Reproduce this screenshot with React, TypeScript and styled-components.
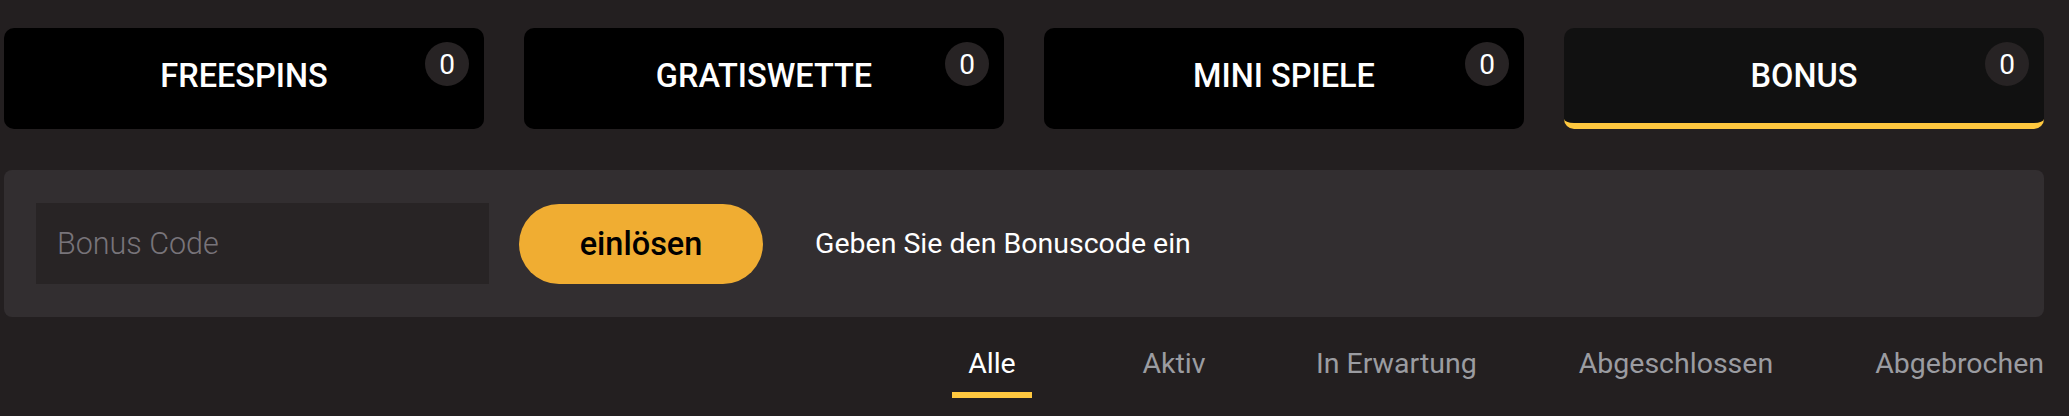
import React from "react";
import styled, { createGlobalStyle } from "styled-components";

const GlobalStyle = createGlobalStyle`
  html, body {
    margin: 0;
    padding: 0;
    background: #231f20;
    font-family: Roboto, "Liberation Sans", Arial, sans-serif;
  }
  * { box-sizing: border-box; }
`;

const Page = styled.div`
  width: 2069px;
  height: 416px;
  padding: 28px 25px 0 4px;
  background: #231f20;
`;

const CardRow = styled.div`
  display: grid;
  grid-template-columns: repeat(4, 1fr);
  gap: 40px;
`;

const Card = styled.div<{ $active?: boolean }>`
  position: relative;
  height: 101px;
  border-radius: 10px;
  background: ${(p) => (p.$active ? "#111111" : "#000000")};
  border-bottom: 6px solid ${(p) => (p.$active ? "#ffc83f" : "#000000")};
  display: flex;
  align-items: center;
  justify-content: center;
  color: #ffffff;
  font-size: 32.5px;
  font-weight: 500;
  text-transform: uppercase;
  cursor: pointer;
`;

const Badge = styled.span`
  position: absolute;
  top: 14px;
  right: 15px;
  width: 44px;
  height: 44px;
  border-radius: 50%;
  background: #272324;
  color: #ffffff;
  font-size: 28px;
  font-weight: 400;
  display: flex;
  align-items: center;
  justify-content: center;
`;

const Panel = styled.div`
  margin-top: 41px;
  background: #322e30;
  border-radius: 8px;
  padding: 33px 32px;
  display: flex;
  align-items: center;
`;

const CodeInput = styled.input`
  width: 453px;
  height: 81px;
  border: none;
  outline: none;
  background: #282425;
  padding: 0 0 0 21px;
  font-family: Roboto, "Liberation Sans", Arial, sans-serif;
  font-size: 30.5px;
  font-weight: 300;
  color: #ffffff;
  &::placeholder {
    color: #78747a;
  }
`;

const RedeemButton = styled.button`
  margin-left: 30px;
  width: 244px;
  height: 80px;
  border: none;
  border-radius: 40px;
  background: #f0ad32;
  color: #000000;
  font-family: Roboto, "Liberation Sans", Arial, sans-serif;
  font-size: 32.5px;
  font-weight: 500;
  cursor: pointer;
`;

const Hint = styled.span`
  margin-left: 52px;
  color: #ffffff;
  font-size: 28.5px;
  font-weight: 400;
`;

const Tabs = styled.div`
  margin-top: 30px;
  display: flex;
  justify-content: flex-end;
  gap: 102px;
`;

const Tab = styled.div<{ $active?: boolean }>`
  min-width: 80px;
  text-align: center;
  font-size: 28.5px;
  line-height: 33px;
  padding-bottom: 12px;
  border-bottom: 6px solid ${(p) => (p.$active ? "#ffc83f" : "transparent")};
  color: ${(p) => (p.$active ? "#ffffff" : "#9b9ca1")};
  white-space: nowrap;
  cursor: pointer;
`;

const cards = [
  { label: "Freespins", count: 0 },
  { label: "Gratiswette", count: 0 },
  { label: "Mini Spiele", count: 0 },
  { label: "Bonus", count: 0, active: true },
];

const tabs = ["Alle", "Aktiv", "In Erwartung", "Abgeschlossen", "Abgebrochen"];

export default function App() {
  return (
    <>
      <GlobalStyle />
      <Page>
        <CardRow>
          {cards.map((c) => (
            <Card key={c.label} $active={c.active}>
              {c.label}
              <Badge>{c.count}</Badge>
            </Card>
          ))}
        </CardRow>
        <Panel>
          <CodeInput placeholder="Bonus Code" />
          <RedeemButton>einlösen</RedeemButton>
          <Hint>Geben Sie den Bonuscode ein</Hint>
        </Panel>
        <Tabs>
          {tabs.map((t, i) => (
            <Tab key={t} $active={i === 0}>
              {t}
            </Tab>
          ))}
        </Tabs>
      </Page>
    </>
  );
}
